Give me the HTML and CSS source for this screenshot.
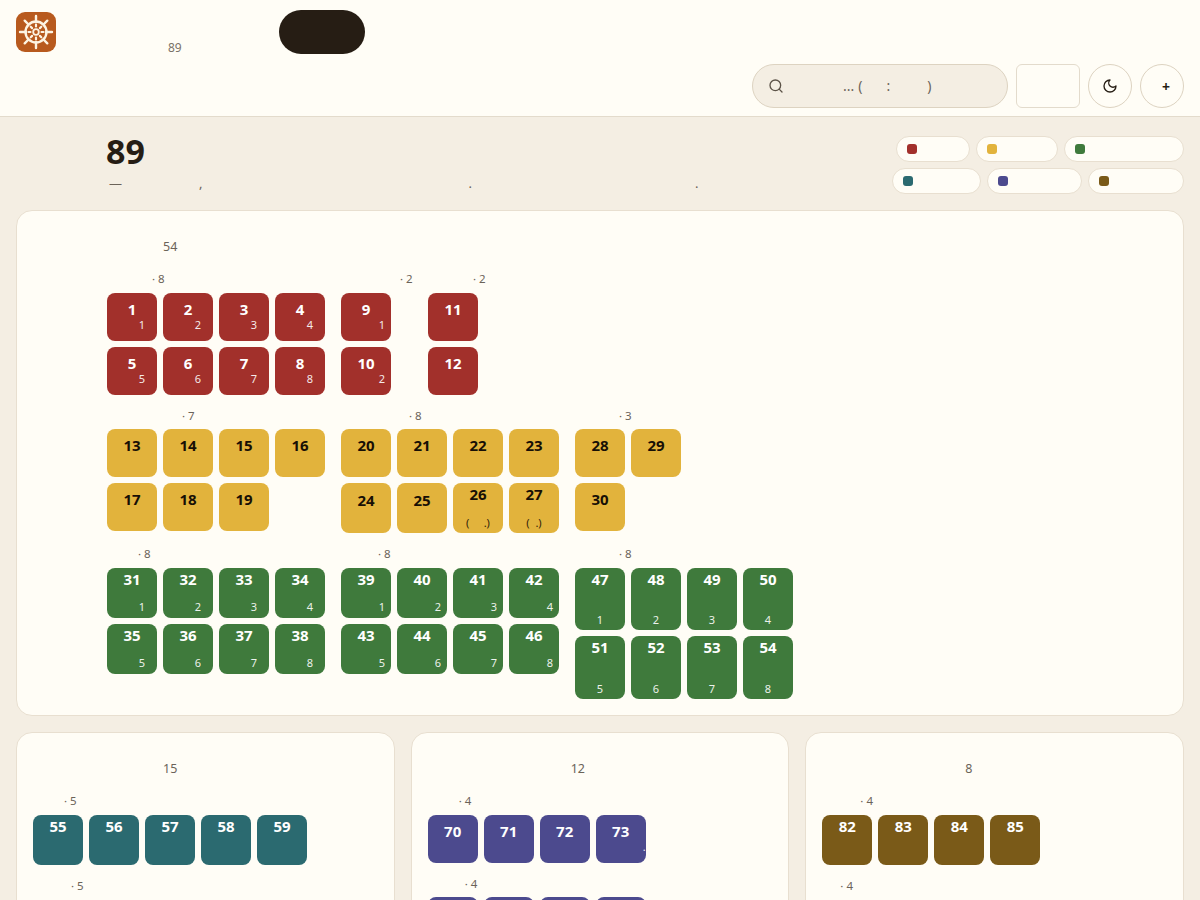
FILE: index.html
```html
<!DOCTYPE html>
<html lang="en">
<head>
  <meta charset="UTF-8">
  <meta name="viewport" content="width=device-width, initial-scale=1.0">
  <title>89</title>
  <link rel="stylesheet" href="styles.css">
</head>
<body>
  <header class="topbar">
    <div class="brand-row">
      <div class="logo">
        <svg viewBox="0 0 40 40" width="40" height="40" fill="none" stroke="#fdf4e3" stroke-linecap="round">
          <circle cx="20" cy="20" r="10.5" stroke-width="2.4"/>
          <circle cx="20" cy="20" r="2.8" stroke-width="1.8"/>
          <path stroke-width="2.4" d="M20 4v6M20 30v6M4 20h6M30 20h6M8.7 8.7l3.8 3.8M27.5 27.5l3.8 3.8M31.3 8.7l-3.8 3.8M12.500 27.500l-3.800 3.800"/>
          <path stroke-width="2.2" d="M20 12.500v2M20 25.500v2M12.500 20h2M25.500 20h2M14.700 14.700l1.400 1.400M23.900 23.900l1.400 1.400M25.300 14.700l-1.400 1.400M16.100 23.900l-1.400 1.400"/>
        </svg>
      </div>
      <div class="brand-count">89</div>
      <div class="dark-pill"></div>
    </div>
    <div class="tools-row">
      <div class="search">
        <svg class="search-icon" viewBox="0 0 24 24" width="16" height="16" fill="none" stroke="#5c5348" stroke-width="2" stroke-linecap="round" stroke-linejoin="round">
          <circle cx="11" cy="11" r="8"/>
          <path d="m21 21-4.300-4.300"/>
        </svg>
        <span class="search-hint">...<span class="hint-open">(</span><span class="hint-colon">:</span><span class="hint-close">)</span></span>
      </div>
      <div class="tool-box"></div>
      <div class="round-btn">
        <svg viewBox="0 0 24 24" width="16" height="16" fill="none" stroke="#261d14" stroke-width="2" stroke-linecap="round" stroke-linejoin="round">
          <path d="M12 3a6 6 0 0 0 9 9 9 9 0 1 1-9-9Z"/>
        </svg>
      </div>
      <div class="round-btn plus-btn">+</div>
    </div>
  </header>

  <main class="page">
    <section class="intro">
      <div class="intro-text">
        <h1>89</h1>
        <p class="intro-line">—<span class="mark-comma">,</span><span class="mark-stop1">.</span><span class="mark-stop2">.</span></p>
      </div>
      <div class="legend">
        <div class="legend-row">
          <div class="chip chip-74"><i class="dot red"></i></div>
          <div class="chip chip-82"><i class="dot yellow"></i></div>
          <div class="chip chip-120"><i class="dot green"></i></div>
        </div>
        <div class="legend-row">
          <div class="chip chip-89"><i class="dot teal"></i></div>
          <div class="chip chip-95"><i class="dot purple"></i></div>
          <div class="chip chip-96"><i class="dot brown"></i></div>
        </div>
      </div>
    </section>

    <section class="card main-card">
      <div class="card-title title-147">54</div>

      <div class="rows">
        <div class="row">
          <div class="group">
            <div class="label in-45">· 8</div>
            <div class="keys cols-4 red">
              <div class="key">1<span class="sub">1</span></div>
              <div class="key">2<span class="sub">2</span></div>
              <div class="key">3<span class="sub">3</span></div>
              <div class="key">4<span class="sub">4</span></div>
              <div class="key">5<span class="sub">5</span></div>
              <div class="key">6<span class="sub">6</span></div>
              <div class="key">7<span class="sub">7</span></div>
              <div class="key">8<span class="sub">8</span></div>
            </div>
          </div>
          <div class="group w-71">
            <div class="label in-59">· 2</div>
            <div class="keys cols-1 red">
              <div class="key">9<span class="sub sub-near">1</span></div>
              <div class="key">10<span class="sub sub-near">2</span></div>
            </div>
          </div>
          <div class="group w-57">
            <div class="label in-45">· 2</div>
            <div class="keys cols-1 red">
              <div class="key">11</div>
              <div class="key">12</div>
            </div>
          </div>
        </div>

        <div class="row">
          <div class="group">
            <div class="label label-tight in-75">· 7</div>
            <div class="keys cols-4 yellow">
              <div class="key">13</div>
              <div class="key">14</div>
              <div class="key">15</div>
              <div class="key">16</div>
              <div class="key">17</div>
              <div class="key">18</div>
              <div class="key">19</div>
            </div>
          </div>
          <div class="group">
            <div class="label label-tight in-68">· 8</div>
            <div class="keys cols-4 yellow">
              <div class="key">20</div>
              <div class="key">21</div>
              <div class="key">22</div>
              <div class="key">23</div>
              <div class="key tall low">24</div>
              <div class="key tall low">25</div>
              <div class="key tall top">26<span class="sub sub-mid">(     .)</span></div>
              <div class="key tall top">27<span class="sub sub-mid">(  .)</span></div>
            </div>
          </div>
          <div class="group">
            <div class="label label-tight in-44">· 3</div>
            <div class="keys cols-4 yellow">
              <div class="key">28</div>
              <div class="key">29</div>
              <div class="key break-row">30</div>
            </div>
          </div>
        </div>

        <div class="row">
          <div class="group">
            <div class="label in-31">· 8</div>
            <div class="keys cols-4 green">
              <div class="key tall top">31<span class="sub sub-low">1</span></div>
              <div class="key tall top">32<span class="sub sub-low">2</span></div>
              <div class="key tall top">33<span class="sub sub-low">3</span></div>
              <div class="key tall top">34<span class="sub sub-low">4</span></div>
              <div class="key tall top">35<span class="sub sub-low">5</span></div>
              <div class="key tall top">36<span class="sub sub-low">6</span></div>
              <div class="key tall top">37<span class="sub sub-low">7</span></div>
              <div class="key tall top">38<span class="sub sub-low">8</span></div>
            </div>
          </div>
          <div class="group">
            <div class="label in-37">· 8</div>
            <div class="keys cols-4 green">
              <div class="key tall top">39<span class="sub sub-low sub-near">1</span></div>
              <div class="key tall top">40<span class="sub sub-low sub-near">2</span></div>
              <div class="key tall top">41<span class="sub sub-low sub-near">3</span></div>
              <div class="key tall top">42<span class="sub sub-low sub-near">4</span></div>
              <div class="key tall top">43<span class="sub sub-low sub-near">5</span></div>
              <div class="key tall top">44<span class="sub sub-low sub-near">6</span></div>
              <div class="key tall top">45<span class="sub sub-low sub-near">7</span></div>
              <div class="key tall top">46<span class="sub sub-low sub-near">8</span></div>
            </div>
          </div>
          <div class="group">
            <div class="label in-44">· 8</div>
            <div class="keys cols-4 green">
              <div class="key big top">47<span class="sub sub-mid">1</span></div>
              <div class="key big top">48<span class="sub sub-mid">2</span></div>
              <div class="key big top">49<span class="sub sub-mid">3</span></div>
              <div class="key big top">50<span class="sub sub-mid">4</span></div>
              <div class="key bigger top">51<span class="sub sub-mid">5</span></div>
              <div class="key bigger top">52<span class="sub sub-mid">6</span></div>
              <div class="key bigger top">53<span class="sub sub-mid">7</span></div>
              <div class="key bigger top">54<span class="sub sub-mid">8</span></div>
            </div>
          </div>
        </div>
      </div>
    </section>

    <section class="lower">
      <div class="card">
        <div class="card-title title-147">15</div>
        <div class="rows">
          <div class="row">
            <div class="group">
              <div class="label in-31">· 5</div>
              <div class="keys cols-5 teal">
                <div class="key tall top">55</div>
                <div class="key tall top">56</div>
                <div class="key tall top">57</div>
                <div class="key tall top">58</div>
                <div class="key tall top">59</div>
              </div>
            </div>
          </div>
          <div class="row">
            <div class="group">
              <div class="label in-38">· 5</div>
              <div class="keys cols-5 teal">
                <div class="key tall top">60</div>
                <div class="key tall top">61</div>
                <div class="key tall top">62</div>
                <div class="key tall top">63</div>
                <div class="key tall top">64</div>
              </div>
            </div>
          </div>
        </div>
      </div>

      <div class="card">
        <div class="card-title title-160">12</div>
        <div class="rows">
          <div class="row">
            <div class="group">
              <div class="label in-31">· 4</div>
              <div class="keys cols-4 purple">
                <div class="key">70</div>
                <div class="key">71</div>
                <div class="key">72</div>
                <div class="key">73<span class="sub sub-edge">.</span></div>
              </div>
            </div>
          </div>
          <div class="row">
            <div class="group">
              <div class="label label-tight in-37">· 4</div>
              <div class="keys cols-4 purple">
                <div class="key">74</div>
                <div class="key">75</div>
                <div class="key">76</div>
                <div class="key">77</div>
              </div>
            </div>
          </div>
        </div>
      </div>

      <div class="card">
        <div class="card-title title-160">8</div>
        <div class="rows">
          <div class="row">
            <div class="group">
              <div class="label in-38">· 4</div>
              <div class="keys cols-4 brown">
                <div class="key tall top">82</div>
                <div class="key tall top">83</div>
                <div class="key tall top">84</div>
                <div class="key tall top">85</div>
              </div>
            </div>
          </div>
          <div class="row">
            <div class="group">
              <div class="label in-18">· 4</div>
              <div class="keys cols-4 brown">
                <div class="key tall top">86</div>
                <div class="key tall top">87</div>
                <div class="key tall top">88</div>
                <div class="key tall top">89</div>
              </div>
            </div>
          </div>
        </div>
      </div>
    </section>
  </main>
</body>
</html>
```

FILE: styles.css
```css
html, body {
  margin: 0;
  padding: 0;
}
body {
  font-family: "Noto Sans", sans-serif;
  background: #f4eee3;
  color: #261d14;
  height: 900px;
  overflow: hidden;
}

/* header */
.topbar {
  background: #fffdf6;
  border-bottom: 1px solid #e3dbcc;
  height: 116px;
}
.brand-row {
  display: flex;
  padding: 10px 16px 0;
  height: 44px;
}
.logo {
  width: 40px;
  height: 40px;
  margin-top: 2px;
  background: #b85a1e;
  border-radius: 9px;
}
.logo svg {
  display: block;
}
.brand-count {
  margin-left: 112px;
  padding-top: 29px;
  font-size: 12px;
  line-height: 17px;
  color: #7a7268;
}
.dark-pill {
  width: 86px;
  height: 44px;
  margin-left: 97px;
  background: #261d14;
  border-radius: 22px;
}
.tools-row {
  display: flex;
  justify-content: flex-end;
  gap: 8px;
  margin-top: 10px;
  padding: 0 16px;
}
.search {
  display: flex;
  align-items: center;
  box-sizing: border-box;
  width: 256px;
  height: 44px;
  padding-left: 15px;
  background: #f4eee3;
  border: 1px solid #ddd3c1;
  border-radius: 22px;
}
.search-icon {
  flex: none;
}
.search-hint {
  margin-left: 59px;
  padding-bottom: 1px;
  font-size: 14px;
  line-height: 18px;
  color: #6b6359;
  white-space: nowrap;
}
.hint-open {
  margin-left: 4px;
}
.hint-colon {
  margin-left: 24px;
}
.hint-close {
  margin-left: 37px;
}
.tool-box {
  box-sizing: border-box;
  width: 64px;
  height: 44px;
  background: #fffdf6;
  border: 1px solid #e3dbcc;
  border-radius: 6px;
}
.round-btn {
  display: flex;
  align-items: center;
  justify-content: center;
  box-sizing: border-box;
  width: 44px;
  height: 44px;
  background: #fffdf6;
  border: 1px solid #ddd3c1;
  border-radius: 50%;
}
.plus-btn {
  padding-left: 8px;
  font-size: 14px;
  font-weight: 700;
}

/* intro */
.page {
  padding: 0 16px;
}
.intro {
  display: flex;
  justify-content: space-between;
  height: 93px;
}
.intro-text {
  padding-left: 90px;
}
.intro-text h1 {
  margin: 12px 0 0;
  font-size: 34px;
  line-height: 44px;
  font-weight: 700;
}
.intro-line {
  margin: 1px 0 0 3px;
  font-size: 13px;
  line-height: 18px;
  color: #6b6359;
}
.mark-comma {
  margin-left: 77px;
}
.mark-stop1 {
  margin-left: 266px;
}
.mark-stop2 {
  margin-left: 223px;
}
.legend {
  display: flex;
  flex-direction: column;
  gap: 6px;
  padding-top: 19px;
}
.legend-row {
  display: flex;
  justify-content: flex-end;
  gap: 6px;
}
.chip {
  display: flex;
  align-items: center;
  box-sizing: border-box;
  height: 26px;
  padding-left: 10px;
  background: #fffdf6;
  border: 1px solid #e8dfd0;
  border-radius: 13px;
}
.chip-74 { width: 74px; }
.chip-82 { width: 82px; }
.chip-120 { width: 120px; }
.chip-89 { width: 89px; }
.chip-95 { width: 95px; }
.chip-96 { width: 96px; }
.dot {
  width: 10px;
  height: 10px;
  border-radius: 3px;
  background: var(--family);
}

/* family colours */
.red { --family: #a2302b; --ink: #fff; }
.yellow { --family: #e2b33c; --ink: #170f05; }
.green { --family: #3f7a3c; --ink: #fff; }
.teal { --family: #2b6a70; --ink: #fff; }
.purple { --family: #4c4a8e; --ink: #fff; }
.brown { --family: #7a5a18; --ink: #fff; }

/* cards */
.card {
  box-sizing: border-box;
  padding: 16px;
  background: #fffdf6;
  border: 1px solid #e8dfd0;
  border-radius: 16px;
}
.lower {
  display: grid;
  grid-template-columns: repeat(3, 1fr);
  gap: 16px;
  margin-top: 16px;
}
.card-title {
  margin-bottom: 17px;
  padding-top: 12px;
  font-size: 12.5px;
  line-height: 16px;
  color: #6b6359;
}
.title-147 {
  padding-left: 130px;
}
.title-160 {
  padding-left: 143px;
}

/* key groups */
.rows {
  display: flex;
  flex-direction: column;
  gap: 14px;
}
.row {
  display: flex;
  align-items: flex-start;
  gap: 16px;
}
.main-card .row {
  padding-left: 74px;
}
.w-71 { width: 71px; }
.w-57 { width: 57px; }
.label {
  margin-bottom: 7px;
  font-size: 11.5px;
  line-height: 14px;
  color: #6b6359;
  white-space: nowrap;
}
.label-tight {
  margin-bottom: 6px;
}
.in-18 { padding-left: 18px; }
.in-31 { padding-left: 31px; }
.in-37 { padding-left: 37px; }
.in-38 { padding-left: 38px; }
.in-44 { padding-left: 44px; }
.in-45 { padding-left: 45px; }
.in-59 { padding-left: 59px; }
.in-68 { padding-left: 68px; }
.in-75 { padding-left: 75px; }
.keys {
  display: grid;
  gap: 6px;
  align-items: start;
}
.cols-1 { grid-template-columns: 50px; }
.cols-4 { grid-template-columns: repeat(4, 50px); }
.cols-5 { grid-template-columns: repeat(5, 50px); }
.key {
  position: relative;
  box-sizing: border-box;
  height: 48px;
  padding-top: 6px;
  background: var(--family);
  border-radius: 8px;
  color: var(--ink);
  font-size: 15px;
  line-height: 20px;
  font-weight: 700;
  text-align: center;
}
.key.tall { height: 50px; }
.key.big { height: 62px; }
.key.bigger { height: 63px; }
.key.low { padding-top: 7px; }
.key.top { padding-top: 1px; }
.break-row { grid-column: 1; }
.sub {
  position: absolute;
  right: 12px;
  bottom: 9px;
  font-size: 11px;
  line-height: 14px;
  font-weight: 400;
  opacity: 0.9;
}
.sub-low { bottom: 4px; }
.sub-near { right: 6px; }
.sub-mid {
  left: 0;
  right: 0;
  bottom: 3px;
  text-align: center;
  white-space: pre;
}
.sub-edge {
  right: 0;
  bottom: 9px;
}
```
